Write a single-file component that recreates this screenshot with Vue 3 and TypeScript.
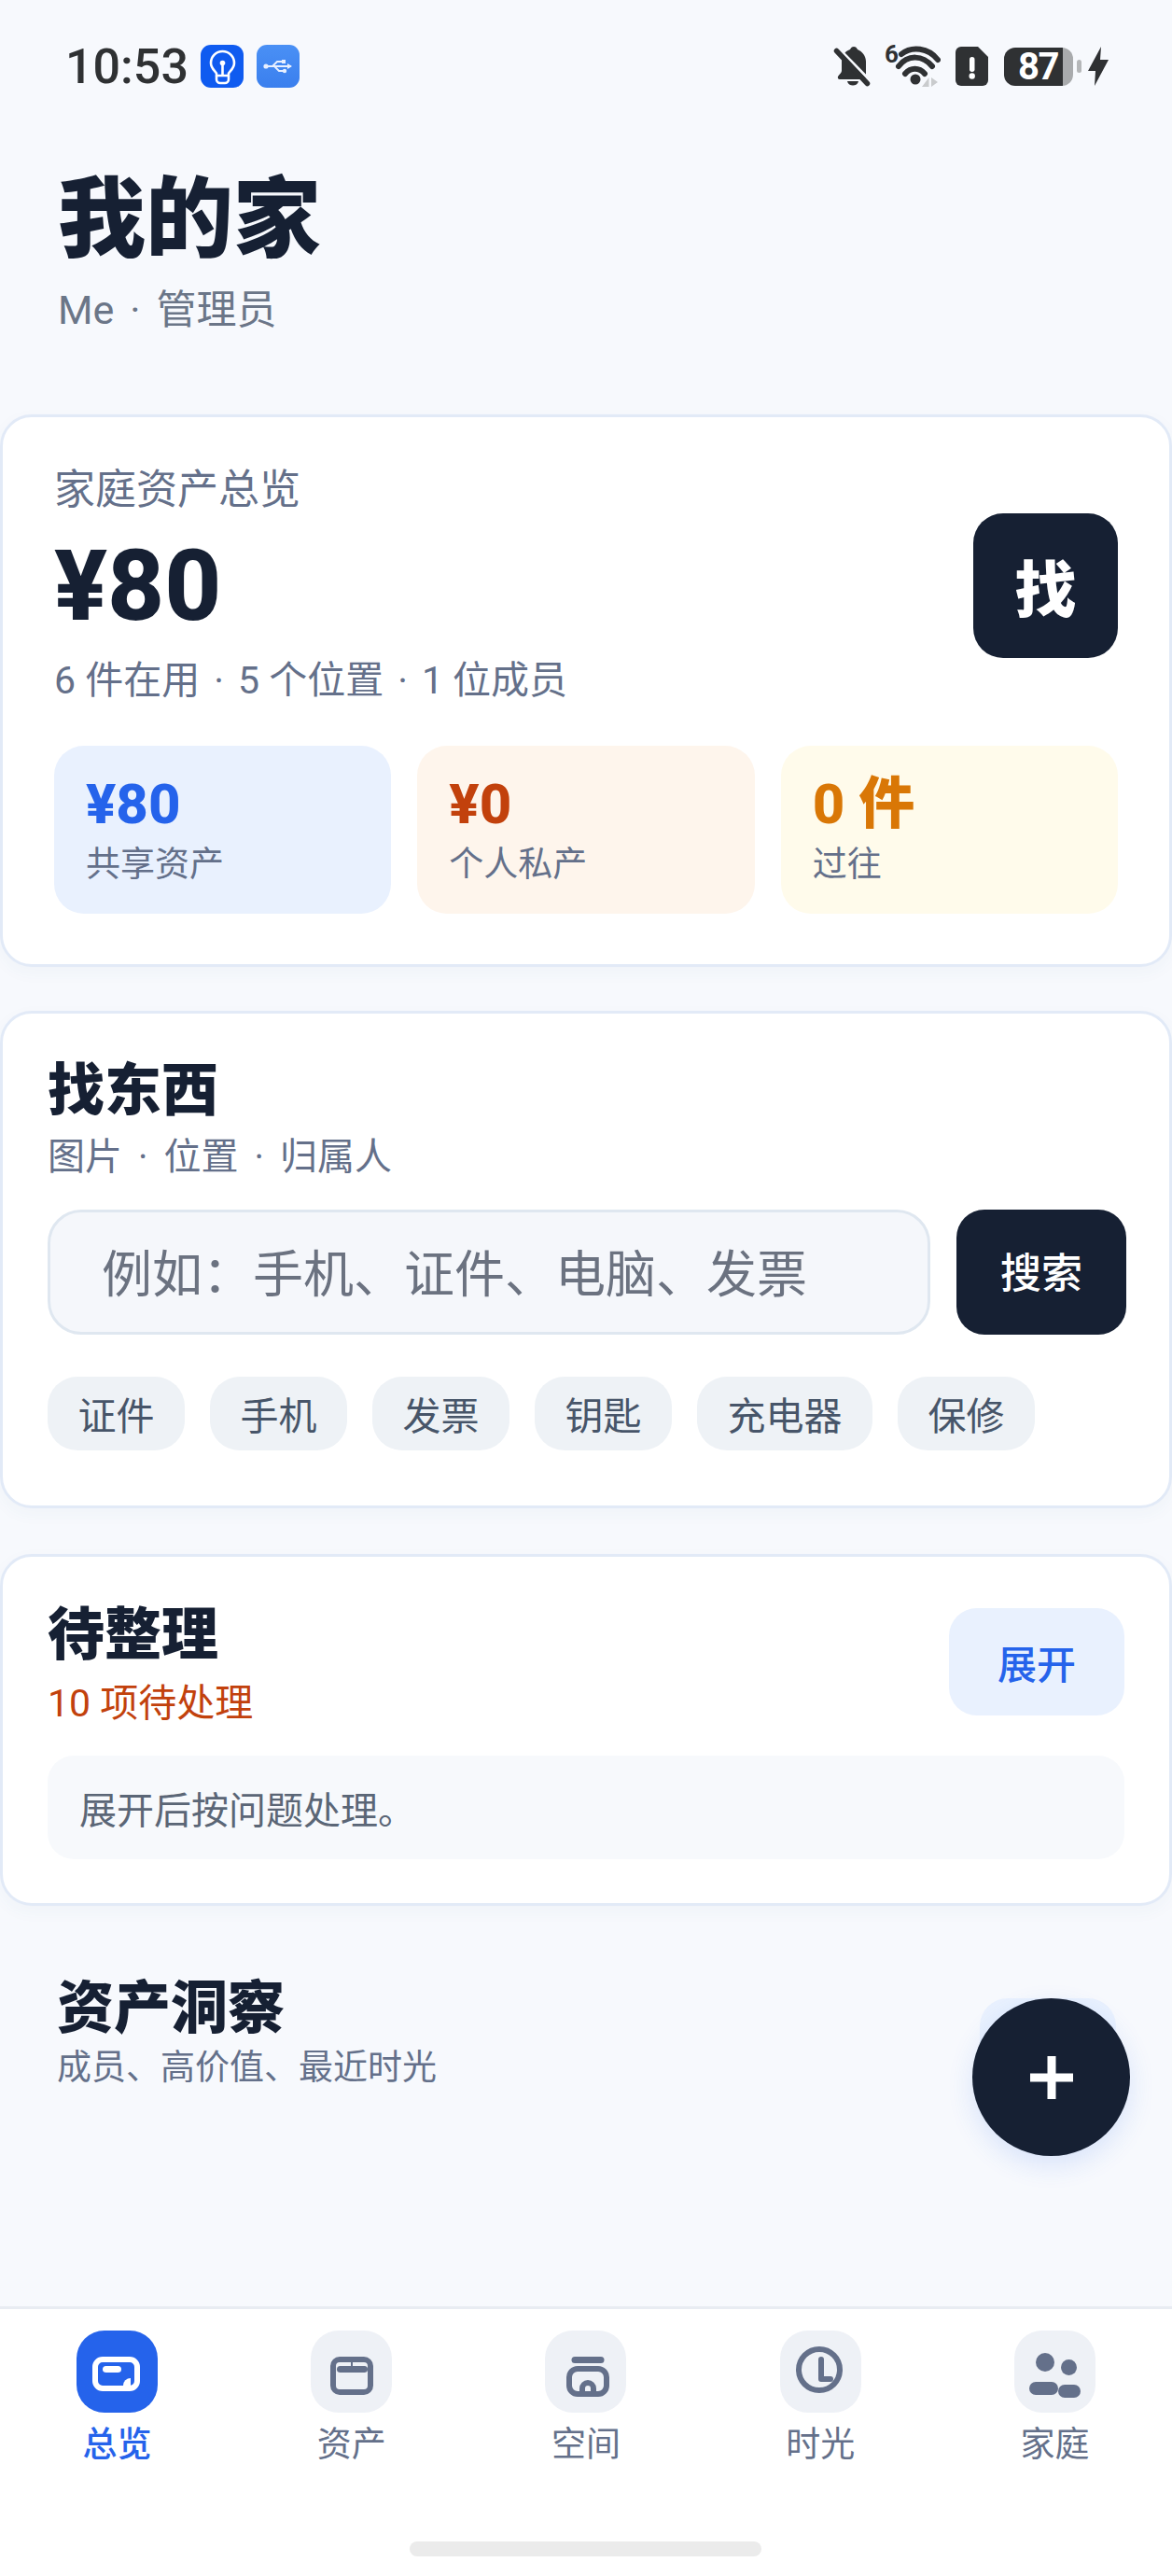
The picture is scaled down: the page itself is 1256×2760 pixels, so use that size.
<script setup lang="ts">
const stats = [
  { value: '¥80', label: '共享资产', tone: 'blue' },
  { value: '¥0', label: '个人私产', tone: 'orange' },
  { value: '0 件', label: '过往', tone: 'amber' },
]
const chips = ['证件', '手机', '发票', '钥匙', '充电器', '保修']
const tabs = [
  { key: 'home', label: '总览' },
  { key: 'assets', label: '资产' },
  { key: 'space', label: '空间' },
  { key: 'time', label: '时光' },
  { key: 'family', label: '家庭' },
]
</script>

<template>
  <div class="page">
    <div class="status">
      <div class="status-left">
        <span class="clock">10:53</span>
        <span class="app-icon bulb">
          <svg width="46" height="46" viewBox="0 0 46 46" fill="none" stroke="#fff" stroke-width="2.6">
            <path d="M17 33v-2c0-2-6-5-6-11.500a12.500 12.500 0 0 1 25 0c0 6.500-6 9.500-6 11.500v2z" stroke-linejoin="round" />
            <path d="M17 33v4a4 4 0 0 0 4 4h5a4 4 0 0 0 4-4v-4M23.500 20v13" />
            <circle cx="23.500" cy="19.500" r="2.800" fill="#fff" stroke="none" />
          </svg>
        </span>
        <span class="app-icon usb">
          <svg width="46" height="46" viewBox="0 0 46 46" fill="none" stroke="#e8f0ff" stroke-width="1.800">
            <path d="M11 23h26M17 23l5-5h6M19 23l5 5h5" />
            <circle cx="10" cy="23" r="2.600" fill="#e8f0ff" stroke="none" />
            <path d="M33 20l5 3-5 3z" fill="#e8f0ff" stroke="none" />
            <rect x="27" y="16" width="4" height="4" fill="#e8f0ff" stroke="none" />
            <circle cx="30" cy="28" r="2.200" fill="#e8f0ff" stroke="none" />
          </svg>
        </span>
      </div>
      <div class="status-right">
        <svg class="s-bell" width="40" height="44" viewBox="0 0 40 44">
          <path d="M22 1c-2 0-3 1-4 3-6 2-9 7-9 13v10c0 2-3 4-4 6-.5 1.500 0 3 2 3h26c1 0 2-1 2-3V17c0-6-4-11-9-13-1-2-2-3-4-3z" fill="#2f3133" />
          <path d="M15 38h12c-1 6-11 6-12 0z" fill="#2f3133" />
          <path d="M6 3l34 35" stroke="#f7f9fd" stroke-width="3" />
          <path d="M3.500 5.500l33 35" stroke="#2f3133" stroke-width="5.500" stroke-linecap="round" />
        </svg>
        <span class="s-wifi">
          <svg width="61" height="46" viewBox="0 0 61 46" fill="none" stroke="#2f3133" stroke-width="6" stroke-linecap="round">
            <path d="M19 10C30 1 48 3 58 16M16 23C26 10 42 11 52 23M23 31C29 24 38 24 44 31" />
            <circle cx="34" cy="37" r="5.500" fill="#2f3133" stroke="none" />
            <path d="M48.500 35v10h-7.500zM51 35v10l7-5z" fill="#c9cbcd" stroke="none" />
          </svg>
          <span class="wifi-six">6</span>
        </span>
        <svg class="s-sim" width="35" height="42" viewBox="0 0 35 42">
          <path d="M6 0h18l11 11v25a6 6 0 0 1-6 6H6a6 6 0 0 1-6-6V6a6 6 0 0 1 6-6z" fill="#2f3133" />
          <rect x="15" y="11" width="5.500" height="16" rx="2.700" fill="#fff" />
          <circle cx="17.700" cy="31.500" r="3.200" fill="#fff" />
        </svg>
        <span class="battery">
          <span class="battery-body">87</span>
          <span class="battery-nub"></span>
        </span>
        <svg class="s-bolt" width="22" height="42" viewBox="0 0 22 42">
          <path d="M14 0L0 26h8L7 42l15-28h-9z" fill="#2f3133" />
        </svg>
      </div>
    </div>

    <header class="head">
      <h1>我的家</h1>
      <p>Me<span class="dot">·</span>管理员</p>
    </header>

    <section class="card overview">
      <div class="over-top">
        <div>
          <div class="over-label">家庭资产总览</div>
          <div class="over-amount">¥80</div>
          <div class="over-meta">6 件在用<span class="dot">·</span>5 个位置<span class="dot">·</span>1 位成员</div>
        </div>
        <button class="find-btn">找</button>
      </div>
      <div class="tiles">
        <div v-for="s in stats" :key="s.label" class="tile" :class="s.tone">
          <div class="tile-value">{{ s.value }}</div>
          <div class="tile-label">{{ s.label }}</div>
        </div>
      </div>
    </section>

    <section class="card search">
      <h2>找东西</h2>
      <div class="sub">图片<span class="dot">·</span>位置<span class="dot">·</span>归属人</div>
      <div class="search-row">
        <div class="search-input">例如：手机、证件、电脑、发票</div>
        <button class="search-btn">搜索</button>
      </div>
      <div class="chips">
        <span v-for="c in chips" :key="c" class="chip">{{ c }}</span>
      </div>
    </section>

    <section class="card todo">
      <div class="todo-top">
        <div>
          <h2>待整理</h2>
          <div class="sub warn">10 项待处理</div>
        </div>
        <button class="open-btn">展开</button>
      </div>
      <div class="note">展开后按问题处理。</div>
    </section>

    <section class="insight">
      <div>
        <h2>资产洞察</h2>
        <div class="sub small">成员、高价值、最近时光</div>
      </div>
      <div class="insight-btn"></div>
    </section>

    <button class="fab" aria-label="添加">
      <svg width="46" height="46" viewBox="0 0 46 46"><path d="M18.500 0h9v18.500H46v9H27.500V46h-9V27.500H0v-9h18.500z" fill="#fff" /></svg>
    </button>

    <nav class="tabbar">
      <div class="tabs">
        <div v-for="(t, i) in tabs" :key="t.key" class="tab" :class="{ active: i === 0 }">
          <span class="tab-icon">
            <svg width="87" height="88" viewBox="0 0 87 88" fill="none" stroke="#64708a" stroke-width="6">
              <template v-if="t.key === 'home'">
                <rect x="20" y="31" width="45" height="31" rx="8" stroke="#fff" />
                <rect x="28" y="38" width="20" height="7" rx="3.500" fill="#fff" stroke="none" />
                <path d="M50 59a8 8 0 0 1 8-8v8z" fill="#fff" stroke="none" />
              </template>
              <template v-else-if="t.key === 'assets'">
                <rect x="24" y="31" width="40" height="35" rx="7" />
                <rect x="28" y="38" width="33" height="7" rx="3.500" fill="#64708a" stroke="none" />
                <path d="M44 31v7" stroke-width="2" />
              </template>
              <template v-else-if="t.key === 'space'">
                <path d="M32 31.500h28" stroke-width="7" stroke-linecap="round" />
                <rect x="26" y="41" width="40" height="27" rx="9" />
                <path d="M40 68v-6a6 6 0 0 1 12 0v6" />
              </template>
              <template v-else-if="t.key === 'time'">
                <circle cx="42" cy="42" r="22" />
                <path d="M44 31v21h10" stroke-linecap="round" stroke-linejoin="round" />
              </template>
              <template v-else>
                <circle cx="33" cy="34" r="10" fill="#64708a" stroke="none" />
                <circle cx="58.500" cy="39.500" r="8.500" fill="#64708a" stroke="none" />
                <rect x="16" y="55" width="31" height="14" rx="7" fill="#64708a" stroke="none" />
                <rect x="47" y="58" width="24" height="14" rx="7" fill="#64708a" stroke="none" />
              </template>
            </svg>
          </span>
          <span class="tab-label">{{ t.label }}</span>
        </div>
      </div>
      <div class="home-bar"></div>
    </nav>
  </div>
</template>

<style>
html, body {
  margin: 0;
  background: #f7f9fd;
}
</style>

<style scoped>
.page {
  position: relative;
  width: 1256px;
  height: 2760px;
  display: flex;
  flex-direction: column;
  background: #f7f9fd;
  color: #162033;
  font-family: Roboto, "Noto Sans CJK SC", sans-serif;
  overflow: hidden;
}

h1, h2, p { margin: 0; }
button { border: none; padding: 0; font: inherit; cursor: pointer; }
.dot { margin: 0 17px; }

.status {
  height: 46px;
  padding: 48px 68px 0 70px;
  display: flex;
  justify-content: space-between;
  align-items: center;
}
.status-left { display: flex; align-items: center; }
.clock {
  font-size: 52px;
  font-weight: 500;
  color: #2f3133;
  width: 145px;
}
.app-icon {
  width: 46px;
  height: 46px;
  border-radius: 11px;
  margin-right: 14px;
  display: block;
}
.app-icon svg { display: block; }
.bulb { background: #0f5bf0; }
.usb { background: linear-gradient(#4a90f5, #3a7fee); }
.status-right { display: flex; align-items: center; }
.s-bell { margin-right: 14px; }
.s-wifi { position: relative; width: 61px; height: 46px; margin-right: 16px; display: block; }
.s-wifi svg { display: block; }
.wifi-six {
  position: absolute;
  left: 1px;
  top: -5px;
  font-size: 26px;
  line-height: 30px;
  font-weight: 700;
  color: #2f3133;
}
.s-sim { margin-right: 17px; }
.battery { display: flex; align-items: center; margin-right: 7px; }
.battery-body {
  box-sizing: border-box;
  width: 74px;
  height: 41px;
  border-radius: 12px;
  background: linear-gradient(90deg, #2f3133 63px, #a9abad 63px);
  padding-left: 15px;
  color: #fff;
  font-size: 40px;
  line-height: 41px;
  font-weight: 700;
  letter-spacing: -1.500px;
  white-space: nowrap;
}
.battery-nub {
  width: 5px;
  height: 14px;
  border-radius: 3px;
  background: #b5b7b9;
  margin-left: 4px;
}

.head { padding: 89px 60px 0 62px; }
.head h1 {
  font-size: 94px;
  line-height: 106px;
  font-weight: 800;
}
.head p {
  margin-top: 16px;
  font-size: 43px;
  line-height: 54px;
  color: #6b7688;
}

.card {
  background: #fff;
  border: 3px solid #e2eaf7;
  border-radius: 34px;
  box-shadow: 0 6px 18px rgba(60, 90, 140, 0.04);
  box-sizing: border-box;
  width: 1256px;
}
.overview {
  margin-top: 85px;
  height: 592px;
  padding: 50px 55px 0;
}
.over-top { display: flex; justify-content: space-between; align-items: center; }
.over-label { font-size: 44px; line-height: 56px; color: #64708a; }
.over-amount {
  font-size: 106px;
  line-height: 118px;
  font-weight: 800;
  margin-top: 16px;
}
.over-meta { font-size: 41px; line-height: 56px; color: #64708a; margin-top: 14px; }
.over-meta .dot { margin: 0 15px; }
.find-btn {
  width: 155px;
  height: 155px;
  border-radius: 32px;
  background: #162033;
  color: #fff;
  font-size: 66px;
  font-weight: 800;
}
.tiles {
  display: grid;
  grid-template-columns: repeat(3, 1fr);
  gap: 28px;
  margin-top: 42px;
}
.tile {
  height: 180px;
  border-radius: 32px;
  padding: 28px 34px 0;
  box-sizing: border-box;
}
.tile-value { font-size: 60px; line-height: 70px; font-weight: 800; }
.tile-label { font-size: 37px; line-height: 48px; color: #64708a; margin-top: 6px; }
.tile.blue { background: #e9f1fe; }
.tile.blue .tile-value { color: #2563eb; }
.tile.orange { background: #fef5ec; }
.tile.orange .tile-value { color: #c2410c; }
.tile.amber { background: #fffbeb; }
.tile.amber .tile-value { color: #d97706; }

h2 { font-size: 61px; line-height: 76px; font-weight: 800; }
.sub { font-size: 40px; line-height: 52px; color: #64708a; }
.sub.warn { color: #c2410c; font-size: 41px; }
.sub.small { font-size: 37px; line-height: 48px; margin-top: 2px; }

.search {
  margin-top: 47px;
  height: 533px;
  padding: 45px 46px 0 48px;
}
.search .sub { margin-top: 7px; }
.search-row { display: flex; gap: 28px; margin-top: 30px; }
.search-input {
  width: 946px;
  height: 134px;
  box-sizing: border-box;
  border: 3px solid #dfe7f0;
  border-radius: 36px;
  background: #f5f7fb;
  padding: 0 0 4px 55px;
  display: flex;
  align-items: center;
  font-size: 54px;
  color: #6b7280;
}
.search-btn {
  width: 182px;
  height: 134px;
  border-radius: 30px;
  background: #162033;
  color: #fff;
  font-size: 44px;
  font-weight: 500;
  padding-bottom: 4px;
}
.chips { display: flex; gap: 27px; margin-top: 45px; }
.chip {
  height: 79px;
  border-radius: 32px;
  background: #eef2f6;
  padding: 0 32.500px 2px;
  box-sizing: border-box;
  display: flex;
  align-items: center;
  font-size: 41px;
  color: #475569;
}

.todo {
  margin-top: 49px;
  height: 377px;
  padding: 48px 48px 0;
}
.todo-top { display: flex; justify-content: space-between; align-items: flex-start; }
.todo h2 { line-height: 72px; }
.todo .sub { margin-top: 11px; }
.open-btn {
  width: 188px;
  height: 115px;
  margin-top: 7px;
  border-radius: 30px;
  background: #e9f1fe;
  color: #2563eb;
  font-size: 42px;
  font-weight: 500;
}
.note {
  margin-top: 30px;
  height: 111px;
  border-radius: 28px;
  background: #f7f9fc;
  padding-left: 34px;
  display: flex;
  align-items: center;
  font-size: 40px;
  color: #5b6676;
}

.insight {
  display: flex;
  justify-content: space-between;
  align-items: flex-start;
  padding: 72px 60px 0 61px;
}
.insight h2 { line-height: 76px; }
.insight-btn {
  width: 146px;
  height: 115px;
  border-radius: 30px;
  background: #e9f1fe;
  margin-top: 27px;
}

.fab {
  position: absolute;
  left: 1042px;
  top: 2141px;
  width: 169px;
  height: 169px;
  border-radius: 50%;
  background: #162033;
  display: flex;
  align-items: center;
  justify-content: center;
  box-shadow: 0 10px 28px rgba(37, 99, 235, 0.14);
}

.tabbar {
  margin-top: auto;
  height: 289px;
  box-sizing: border-box;
  background: #fff;
  border-top: 3px solid #e8ecf2;
  position: relative;
}
.tabs { display: grid; grid-template-columns: repeat(5, 1fr); padding-top: 23px; }
.tab { display: flex; flex-direction: column; align-items: center; }
.tab-icon {
  width: 87px;
  height: 88px;
  border-radius: 30px;
  background: #eef1f6;
  display: block;
}
.tab-icon svg { display: block; }
.tab-label {
  margin-top: 11px;
  font-size: 37px;
  line-height: 48px;
  color: #64708a;
}
.tab.active .tab-icon { background: #2563eb; }
.tab.active .tab-label { color: #2563eb; font-weight: 500; }
.home-bar {
  position: absolute;
  left: 439px;
  bottom: 21px;
  width: 377px;
  height: 16px;
  border-radius: 8px;
  background: #ebebeb;
}
</style>
